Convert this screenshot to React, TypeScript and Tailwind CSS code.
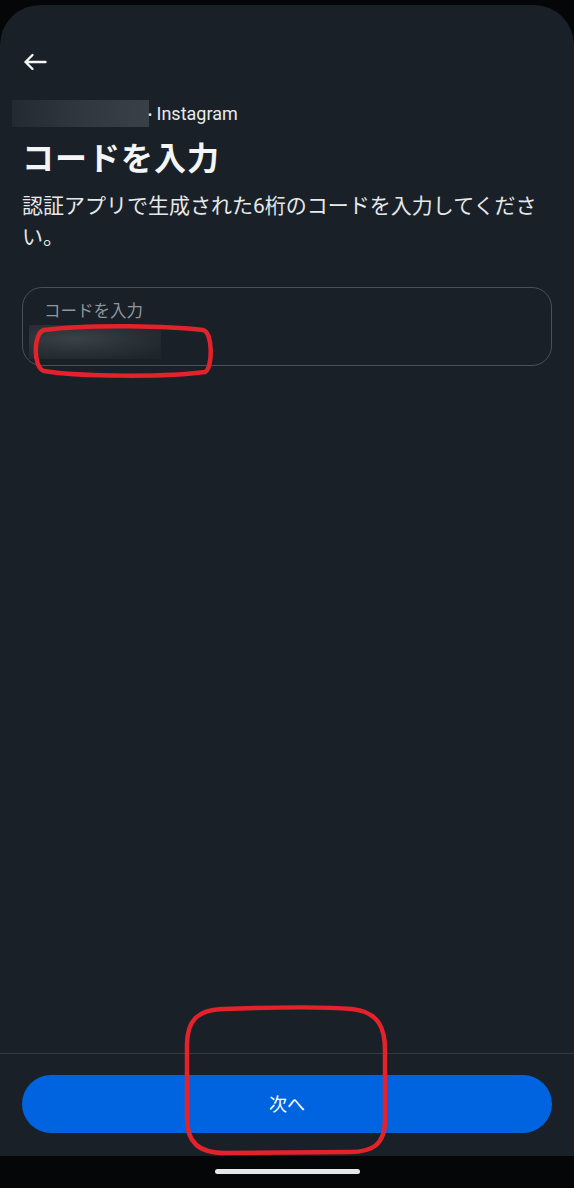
import { useState } from "react";

const font = { fontFamily: '"Roboto", "Noto Sans CJK JP", sans-serif' };

function BackArrow() {
  return (
    <svg width="24" height="18" viewBox="0 0 24 18" fill="none">
      <path
        d="M22.5 9H2.5M9.5 2L2.5 9l7 7"
        stroke="#f2f4f5"
        strokeWidth="2.4"
        strokeLinecap="round"
        strokeLinejoin="round"
      />
    </svg>
  );
}

export default function App() {
  const [code, setCode] = useState("");

  return (
    <div
      className="relative w-[574px] h-[1188px] bg-[#050607] flex flex-col overflow-hidden"
      style={font}
    >
      <div className="mt-[5px] flex-1 rounded-t-[40px] bg-[#1a2027] flex flex-col">
        <div className="flex-1 px-[22px]">
          <button className="mt-[48px] ml-[1px] block">
            <BackArrow />
          </button>

          <div className="mt-[29px] flex items-center h-[27px] -ml-[10px]">
            <div className="w-[137px] h-[27px] bg-gradient-to-r from-[#232a31] via-[#30373e] to-[#394047] blur-[0.5px]" />
            <span className="text-[#e8eaec] text-[18px] -ml-[1px]">
              <span className="text-[12px] relative -top-[1px]">•</span> Instagram
            </span>
          </div>

          <h1 className="mt-[12px] text-[32px] leading-[40px] font-bold text-[#f3f5f6] tracking-[1px]">
            コードを入力
          </h1>

          <p className="mt-[12px] text-[21px] leading-[31px] text-[#e6e8ea]">
            認証アプリで生成された6桁のコードを入力してください。
          </p>

          <div className="mt-[34px] h-[79px] rounded-[20px] border border-[#48505a] px-[21px] pt-[13px]">
            <div className="text-[16.5px] leading-[22px] text-[#8f979e]">
              コードを入力
            </div>
            <div className="relative mt-[2px] h-[34px]">
              <div className="absolute -left-[15px] top-0 w-[132px] h-[34px] bg-[radial-gradient(ellipse_at_35%_40%,#3a4147_0%,#2a3137_45%,#1d242a_90%)]" />
              <input
                value={code}
                onChange={(e) => setCode(e.target.value)}
                className="relative w-full h-full bg-transparent outline-none text-white text-[17px]"
              />
            </div>
          </div>
        </div>

        <div className="border-t border-[#333a41] px-[22px] pt-[21px] pb-[23px]">
          <button className="w-full h-[58px] rounded-full bg-[#0064e0] text-white text-[18px] flex items-center justify-center">
            次へ
          </button>
        </div>
      </div>

      <div className="h-[32px] flex justify-center">
        <div className="mt-[13px] w-[145px] h-[5px] rounded-full bg-[#e6e7e8]" />
      </div>

      {/* annotation marks */}
      <svg
        className="absolute left-0 top-0 pointer-events-none"
        width="574"
        height="1188"
        viewBox="0 0 574 1188"
        fill="none"
      >
        <path
          d="M44 330 C 90 324, 170 326, 203 330 C 213 332, 213 368, 205 372 C 170 377, 80 377, 44 371 C 33 368, 33 333, 44 330 Z"
          stroke="#e3222b"
          strokeWidth="4.5"
        />
        <path
          d="M222 1009 C 280 1007, 330 1007, 352 1009 C 380 1012, 385 1030, 385 1050 L 385 1120 C 385 1145, 372 1152, 350 1152 L 225 1153 C 198 1153, 187 1142, 187 1118 L 187 1045 C 187 1020, 198 1010, 222 1009 Z"
          stroke="#e3222b"
          strokeWidth="4.5"
        />
      </svg>
    </div>
  );
}
